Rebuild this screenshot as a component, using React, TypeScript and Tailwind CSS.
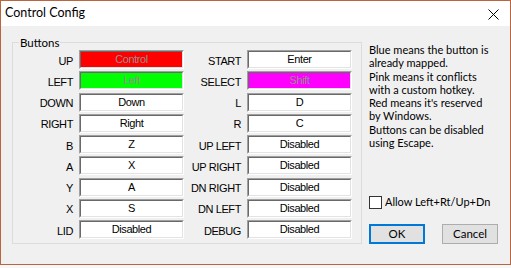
import React from "react";

type Tone = "red" | "green" | "pink" | undefined;

function Field({ text, tone }: { text: string; tone?: Tone }) {
  const bg =
    tone === "red"
      ? "bg-[#ff0000]"
      : tone === "green"
      ? "bg-[#00ff00]"
      : tone === "pink"
      ? "bg-[#ff00ff]"
      : "bg-white";
  const color = tone ? "text-[#8f8f8f]" : "text-black";
  return (
    <div className="w-[105px] h-[19px] border border-t-[#a0a0a0] border-l-[#a0a0a0] border-r-white border-b-white">
      <div
        className={`h-full border border-t-[#696969] border-l-[#696969] border-r-[#e3e3e3] border-b-[#e3e3e3] ${bg} ${color} flex items-center justify-center text-[11px] leading-none tracking-[-0.4px]`}
      >
        {text}
      </div>
    </div>
  );
}

function Row({ label, text, tone, labelW }: { label: string; text: string; tone?: Tone; labelW: string }) {
  return (
    <div className="flex items-center">
      <div className={`${labelW} pr-[6px] text-right text-[11px] leading-none tracking-[-0.4px] pt-[3px] text-black whitespace-nowrap`}>
        {label}
      </div>
      <Field text={text} tone={tone} />
    </div>
  );
}

const ui = { fontFamily: 'Lato, "Noto Sans", sans-serif' };

export default function App() {
  const left: [string, string, Tone?][] = [
    ["UP", "Control", "red"],
    ["LEFT", "Left", "green"],
    ["DOWN", "Down"],
    ["RIGHT", "Right"],
    ["B", "Z"],
    ["A", "X"],
    ["Y", "A"],
    ["X", "S"],
    ["LID", "Disabled"],
  ];
  const right: [string, string, Tone?][] = [
    ["START", "Enter"],
    ["SELECT", "Shift", "pink"],
    ["L", "D"],
    ["R", "C"],
    ["UP LEFT", "Disabled"],
    ["UP RIGHT", "Disabled"],
    ["DN RIGHT", "Disabled"],
    ["DN LEFT", "Disabled"],
    ["DEBUG", "Disabled"],
  ];
  const lines = [
    "Blue means the button is",
    "already mapped.",
    "Pink means it conflicts",
    "with a custom hotkey.",
    "Red means it's reserved",
    "by Windows.",
    "Buttons can be disabled",
    "using Escape.",
  ];
  return (
    <div
      className="w-[511px] h-[268px] bg-[#f7f7f7]"
      style={{ fontFamily: '"Liberation Sans", Arial, sans-serif' }}
    >
      <div className="w-[511px] h-[265px] border border-[#b9653f] bg-[#f0f0f0] flex flex-col">
        <div className="h-[25px] bg-white flex items-center justify-between pl-[4px] pr-[11px]">
          <span className="text-[12.5px] text-black" style={ui}>
            Control Config
          </span>
          <svg width="11" height="11" viewBox="0 0 11 11" className="mt-[1px]">
            <path d="M0.5 0.5 L10.5 10.5 M10.5 0.5 L0.5 10.5" stroke="#000" strokeWidth="1" />
          </svg>
        </div>
        <div className="flex pl-[11px] pt-[9px]">
          <fieldset className="w-[350px] border border-[#dcdcdc] pb-[4px] pt-[0px]">
            <legend className="ml-[6px] px-[1px] text-[11.5px] leading-[15px] text-black" style={ui}>
              Buttons
            </legend>
            <div className="flex">
              <div className="flex flex-col gap-[2.25px]">
                {left.map(([l, t, tone]) => (
                  <Row key={l} label={l} text={t} tone={tone} labelW="w-[66px]" />
                ))}
              </div>
              <div className="flex flex-col gap-[2.25px]">
                {right.map(([l, t, tone]) => (
                  <Row key={l} label={l} text={t} tone={tone} labelW="w-[63px]" />
                ))}
              </div>
            </div>
          </fieldset>
          <div className="ml-[7px] flex flex-col" style={ui}>
            <div className="mt-[8px] text-[11px] leading-[13.3px] text-black">
              {lines.map((s) => (
                <div key={s} className="whitespace-nowrap">
                  {s}
                </div>
              ))}
            </div>
            <label className="mt-[45px] flex items-center gap-[3px] text-[11px] text-black whitespace-nowrap">
              <span className="w-[13px] h-[13px] border border-[#333333] bg-white" />
              <span>Allow Left+Rt/Up+Dn</span>
            </label>
            <div className="mt-[13px] flex gap-[17px]">
              <button className="w-[56px] h-[20px] border-2 border-[#0078d7] bg-[#e1e1e1] text-[11.5px] text-black leading-none">
                OK
              </button>
              <button className="w-[56px] h-[20px] border border-[#adadad] bg-[#e1e1e1] text-[11.5px] text-black leading-none">
                Cancel
              </button>
            </div>
          </div>
        </div>
      </div>
    </div>
  );
}
